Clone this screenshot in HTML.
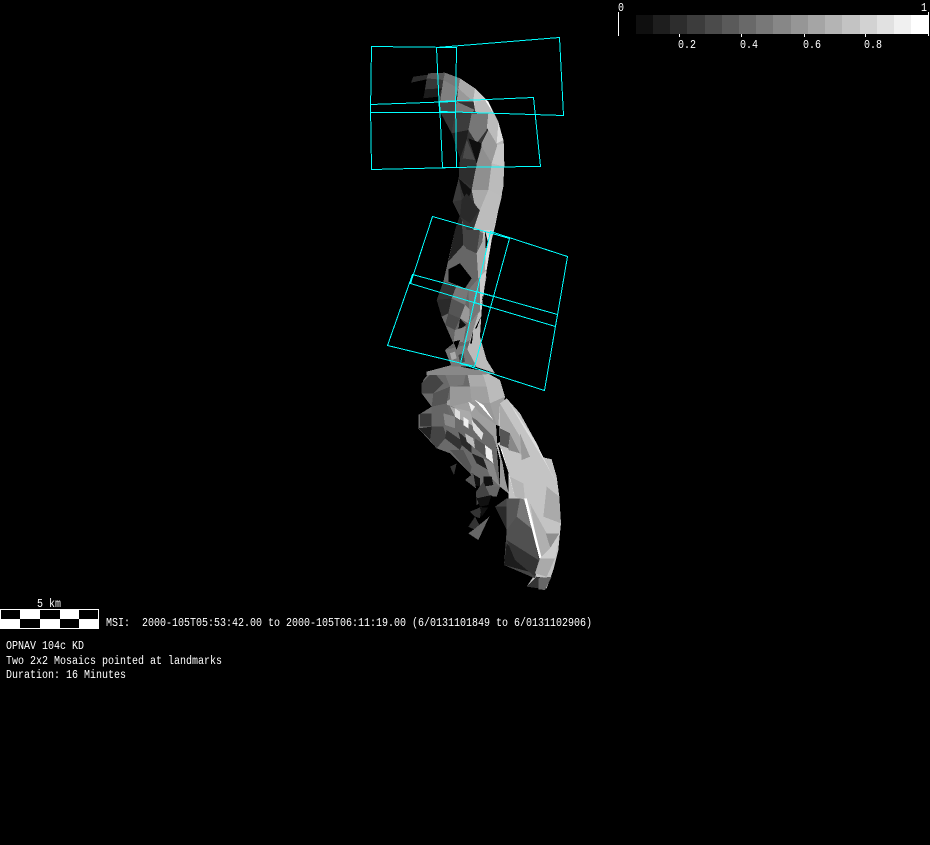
<!DOCTYPE html>
<html><head><meta charset="utf-8"><style>
html,body{margin:0;padding:0;background:#000;width:930px;height:845px;overflow:hidden}
svg{display:block}
text{font-family:"Liberation Mono",monospace;font-size:11.5px;fill:#fff}
.a polygon{shape-rendering:crispEdges}
.c polygon{fill:none;stroke:#0ff;stroke-width:1;shape-rendering:crispEdges}
</style></head><body>
<svg width="930" height="845" viewBox="0 0 930 845" xmlns="http://www.w3.org/2000/svg">
<rect width="930" height="845" fill="#000"/>
<g class="a">
<g transform="translate(400 370) scale(.33333)">
<polygon fill="#6a6a6a" points="55,135 95,110 65,70 70,30 90,5 245,0 300,30 315,80 300,170 290,230 300,350 270,350 240,350 210,310 150,250 110,235 55,175"/>
<polygon fill="#a0a0a0" points="130,100 210,50 245,0 300,30 315,80 300,170 290,230 280,200 230,150 170,115"/>
<polygon fill="#222" points="55,175 95,170 90,210"/>
<polygon fill="#3a3a3a" points="60,130 95,130 95,170 60,170"/>
<polygon fill="#444" points="65,40 100,5 130,40 100,70 65,70"/>
<polygon fill="#555" points="100,70 150,50 140,100 95,110"/>
<polygon fill="#777" points="130,0 200,0 190,45 150,50"/>
<polygon fill="#444" points="95,170 130,170 140,200 110,235 90,210"/>
<polygon fill="#666" points="95,110 140,100 150,140 130,170 95,170"/>
<polygon fill="#999" points="150,50 210,50 215,95 150,110"/>
<polygon fill="#aaa" points="200,0 245,0 260,50 210,50"/>
<polygon fill="#bbb" points="245,0 300,30 315,80 270,100 260,50"/>
<polygon fill="#999" points="210,95 270,100 290,165 240,130"/>
<polygon fill="#eee" points="205,95 225,110 215,125"/>
<polygon fill="#fff" points="225,90 250,105 280,150 265,135"/>
<polygon fill="#aaa" points="150,110 210,125 225,170 165,140"/>
<polygon fill="#ddd" points="165,115 180,125 180,150 165,140"/>
<polygon fill="#eee" points="190,140 205,150 205,175 190,165"/>
<polygon fill="#ddd" points="215,150 250,190 245,210 220,180"/>
<polygon fill="#888" points="130,130 165,140 165,175 135,165"/>
<polygon fill="#333" points="140,180 190,215 180,240 135,205"/>
<polygon fill="#2a2a2a" points="175,185 215,220 215,250 185,225"/>
<polygon fill="#bbb" points="195,190 220,205 225,235 200,215"/>
<polygon fill="#eee" points="255,225 275,240 280,280 258,262"/>
<polygon fill="#555" points="225,205 255,225 258,262 225,235"/>
<polygon fill="#222" points="215,250 250,265 265,300 230,280"/>
<polygon fill="#888" points="250,265 280,280 300,350 270,320"/>
<polygon fill="#555" points="150,240 190,240 215,290 210,310"/>
<polygon fill="#111" points="215,310 240,325 240,350 220,345"/>
<polygon fill="#111" points="250,320 275,320 280,345 250,350"/>
<polygon fill="#333" points="150,290 170,280 162,315"/>
<polygon fill="#555" points="195,330 220,310 228,355"/>
<polygon fill="#666" points="250,350 300,350 290,380 270,378"/>
<polygon fill="#444" points="228,365 250,335 270,378 230,405"/>
<polygon fill="#111" points="230,385 275,375 265,405 240,410"/>
<polygon fill="#333" points="210,425 245,410 240,445 225,440"/>
<polygon fill="#111" points="240,412 265,412 245,440"/>
<polygon fill="#333" points="205,470 225,440 240,468 222,478"/>
<polygon fill="#666" points="222,478 268,440 235,510 205,490"/>
<polygon fill="#c4c4c4" points="300,100 320,85 360,130 410,220 430,262 455,268 470,320 478,380 483,460 475,540 460,600 440,655 380,650 400,620 312,585 320,480 285,410 325,385 325,370 290,230"/>
<polygon fill="#444" points="320,385 375,385 420,565 405,625 312,585 320,480 285,410"/>
<polygon fill="#ddd" points="320,85 410,220 430,262 470,340 440,285 370,170"/>
<polygon fill="#aaa" points="300,100 360,200 375,270 300,170"/>
<polygon fill="#555" points="300,175 330,190 325,235 300,225"/>
<polygon fill="#888" points="330,190 360,250 325,240"/>
<polygon fill="#999" points="360,190 390,260 365,270"/>
<polygon fill="#999" points="300,240 325,310 325,370 300,350"/>
<polygon fill="#fff" points="298,230 306,240 345,380 335,345"/>
<polygon fill="#000" points="288,165 298,168 300,215 292,222"/>
<polygon fill="#000" points="293,222 300,232 326,310 326,370 316,330 308,280"/>
<polygon fill="#b5b5b5" points="330,320 370,340 375,390 345,380"/>
<polygon fill="#aaa" points="440,350 478,380 483,460 430,440"/>
<polygon fill="#555" points="320,385 360,385 350,440 320,480"/>
<polygon fill="#2a2a2a" points="285,410 320,410 320,480"/>
<polygon fill="#777" points="360,385 375,390 400,480 350,440"/>
<polygon fill="#505050" points="350,440 400,480 415,570 320,510 320,480"/>
<polygon fill="#1c1c1c" points="312,585 320,520 405,610"/>
<polygon fill="#333" points="320,510 415,570 405,620 345,570"/>
<polygon fill="#b0b0b0" points="390,400 440,490 470,550 420,565"/>
<polygon fill="#fff" points="372,385 380,385 425,565 418,565"/>
<polygon fill="#8f8f8f" points="437,490 478,490 465,540 450,530"/>
<polygon fill="#ccc" points="478,490 465,565 420,565 450,535"/>
<polygon fill="#aaa" points="420,565 465,565 440,620 405,610"/>
<polygon fill="#333" points="380,650 410,620 440,625 415,655"/>
<polygon fill="#666" points="415,625 455,620 435,660 415,658"/>
</g>
<g transform="translate(380 210) scale(.33333)">
<polygon fill="#888" points="140,485 215,465 345,490 300,495 140,495"/>
<polygon fill="#666" points="245,0 355,0 345,50 335,90 320,180 305,300 300,380 320,450 345,490 285,470 215,470 195,420 220,400 185,320 170,270 190,215 205,150 225,60"/>
<polygon fill="#bbb" points="290,0 355,0 335,90 320,180 305,300 300,380 320,450 345,490 290,470 280,380 295,210 310,70"/>
<polygon fill="#999" points="245,0 290,0 310,70 250,40"/>
<polygon fill="#ccc" points="290,0 355,0 345,50 335,90 310,70"/>
<polygon fill="#444" points="250,30 300,60 290,130 245,110"/>
<polygon fill="#222" points="245,0 250,110 205,155 225,60"/>
<polygon fill="#666" points="205,155 250,105 290,150 290,190 240,170"/>
<polygon fill="#aaa" points="290,130 320,70 320,180 295,210"/>
<polygon fill="#ddd" points="320,70 335,90 320,180 315,180"/>
<polygon fill="#000" points="205,178 240,160 275,205 255,235 205,215"/>
<polygon fill="#333" points="190,215 230,225 215,265 170,270"/>
<polygon fill="#777" points="230,225 265,240 255,285 215,265"/>
<polygon fill="#2a2a2a" points="170,270 215,265 205,310 185,320"/>
<polygon fill="#555" points="215,265 255,285 240,325 205,310"/>
<polygon fill="#999" points="255,285 270,300 265,340 240,325"/>
<polygon fill="#4a4a4a" points="205,310 240,325 225,360 195,345"/>
<polygon fill="#111" points="240,325 258,345 235,360"/>
<polygon fill="#888" points="225,360 258,350 250,395 220,400"/>
<polygon fill="#777" points="265,240 300,200 320,200 300,300 270,340"/>
<polygon fill="#ccc" points="300,200 320,180 305,300 300,300"/>
<polygon fill="#888" points="270,340 300,300 295,380 250,400"/>
<polygon fill="#bbb" points="295,310 305,300 300,380 320,450 345,490 285,470 255,440"/>
<polygon fill="#777" points="195,420 255,405 290,470 215,470"/>
<polygon fill="#aaa" points="210,430 225,425 230,445 215,450"/>
<polygon fill="#444" points="235,435 250,430 255,455 240,460"/>
<polygon fill="#000" points="220,395 240,390 230,420"/>
<polygon fill="#000" points="315,62 325,100 318,130"/>
<polygon fill="#000" points="312,260 305,280 308,258"/>
<polygon fill="#000" points="305,315 285,355 290,355"/>
<polygon fill="#000" points="280,360 270,400 276,400"/>
</g>
<g transform="translate(360 30) scale(.33333)">
<polygon fill="#333" points="190,205 195,178 200,145 205,130 255,128 300,145 345,175 385,215 415,275 430,330 433,400 430,470 415,540 400,600 320,600 300,560 278,515 296,445 300,385 275,310 240,245 235,200"/>
<polygon fill="#bbb" points="345,175 385,215 415,275 430,330 433,400 430,470 415,540 400,600 340,600 360,540 385,480 395,400 385,300 345,240"/>
<polygon fill="#2a2a2a" points="153,158 160,140 203,134 200,148"/>
<polygon fill="#555" points="205,130 255,128 250,150 200,145"/>
<polygon fill="#383838" points="200,145 250,150 245,175 195,178"/>
<polygon fill="#1c1c1c" points="195,178 245,175 235,200 190,205"/>
<polygon fill="#777" points="255,128 300,145 295,175 250,150"/>
<polygon fill="#808080" points="250,150 295,175 285,215 240,215"/>
<polygon fill="#aaa" points="300,145 345,175 340,215 295,175"/>
<polygon fill="#999" points="295,175 340,215 290,215"/>
<polygon fill="#ccc" points="345,175 385,215 345,240 340,210"/>
<polygon fill="#444" points="238,215 290,215 285,245 240,243"/>
<polygon fill="#777" points="290,215 345,240 335,250 285,245"/>
<polygon fill="#bbb" points="345,215 375,210 400,250 345,245"/>
<polygon fill="#fff" points="375,210 385,215 400,250"/>
<polygon fill="#3c3c3c" points="285,250 335,250 325,300 275,310"/>
<polygon fill="#777" points="335,250 385,250 380,300 350,340 325,300"/>
<polygon fill="#bbb" points="385,250 400,250 415,280 410,340 385,300"/>
<polygon fill="#ddd" points="415,280 430,330 410,340"/>
<polygon fill="#1f1f1f" points="275,310 325,300 320,330 300,385"/>
<polygon fill="#4a4a4a" points="320,328 308,385 345,390"/>
<polygon fill="#0f0f0f" points="325,325 365,340 350,400"/>
<polygon fill="#999" points="365,340 385,300 412,345 395,400 365,350"/>
<polygon fill="#8f8f8f" points="350,400 365,350 395,400 385,480 335,480"/>
<polygon fill="#c8c8c8" points="412,345 432,340 433,410 395,400"/>
<polygon fill="#bbb" points="395,400 433,410 425,500 385,480"/>
<polygon fill="#2e2e2e" points="298,410 350,405 335,470 296,445"/>
<polygon fill="#111" points="296,445 335,480 320,520 305,480"/>
<polygon fill="#3a3a3a" points="296,445 305,510 278,515"/>
<polygon fill="#aaa" points="335,480 385,480 360,540 345,530"/>
<polygon fill="#2a2a2a" points="305,510 320,490 358,540 330,580 300,560"/>
<polygon fill="#bcbcbc" points="360,540 385,480 425,500 400,600 340,600"/>
</g>
</g>
<g class="c">
<polygon points="371.5,46.5 456.5,47.5 455.5,112.5 370.5,112.5"/>
<polygon points="436.5,47.5 559.5,37.5 563.5,115.5 439.5,111.5"/>
<polygon points="370.5,104.5 455.5,101.5 456.5,167.5 371.5,169.5"/>
<polygon points="439.5,101.5 533.5,97.5 540.5,166.5 442.5,167.5"/>
<polygon points="432.5,216.5 509.5,238.5 490.5,307.5 410.5,283.5"/>
<polygon points="490.5,231.5 567.5,256.5 555.5,326.5 474.5,302.5"/>
<polygon points="412.5,274.5 493.5,296.5 474.5,366.5 387.5,345.5"/>
<polygon points="476.5,291.5 557.5,314.5 544.5,390.5 460.5,363.5"/>
</g>
<g shape-rendering="crispEdges">
<rect x="636" y="15" width="18" height="19" fill="#0f0f0f"/>
<rect x="653" y="15" width="18" height="19" fill="#1e1e1e"/>
<rect x="670" y="15" width="18" height="19" fill="#2d2d2d"/>
<rect x="687" y="15" width="18" height="19" fill="#3c3c3c"/>
<rect x="705" y="15" width="17" height="19" fill="#4b4b4b"/>
<rect x="722" y="15" width="17" height="19" fill="#5a5a5a"/>
<rect x="739" y="15" width="17" height="19" fill="#696969"/>
<rect x="756" y="15" width="17" height="19" fill="#787878"/>
<rect x="773" y="15" width="18" height="19" fill="#878787"/>
<rect x="791" y="15" width="17" height="19" fill="#969696"/>
<rect x="808" y="15" width="17" height="19" fill="#a5a5a5"/>
<rect x="825" y="15" width="17" height="19" fill="#b4b4b4"/>
<rect x="842" y="15" width="18" height="19" fill="#c3c3c3"/>
<rect x="860" y="15" width="17" height="19" fill="#d2d2d2"/>
<rect x="877" y="15" width="17" height="19" fill="#e1e1e1"/>
<rect x="894" y="15" width="17" height="19" fill="#f0f0f0"/>
<rect x="911" y="15" width="18" height="19" fill="#fff"/>
<rect x="618" y="12" width="1" height="24" fill="#fff"/>
<rect x="928" y="12" width="1" height="24" fill="#fff"/>
<rect x="679" y="34" width="1" height="3" fill="#fff"/>
<rect x="741" y="34" width="1" height="3" fill="#fff"/>
<rect x="804" y="34" width="1" height="3" fill="#fff"/>
<rect x="865" y="34" width="1" height="3" fill="#fff"/>
<rect x="0" y="609" width="99" height="20" fill="#fff"/>
<rect x="1" y="610" width="19" height="9" fill="#000"/>
<rect x="40" y="610" width="20" height="9" fill="#000"/>
<rect x="79" y="610" width="19" height="9" fill="#000"/>
<rect x="20" y="619" width="20" height="9" fill="#000"/>
<rect x="60" y="619" width="19" height="9" fill="#000"/>
</g>
<text x="618" y="11" textLength="6" lengthAdjust="spacingAndGlyphs">0</text>
<text x="921" y="11" textLength="6" lengthAdjust="spacingAndGlyphs">1</text>
<text x="678" y="48" textLength="18" lengthAdjust="spacingAndGlyphs">0.2</text>
<text x="740" y="48" textLength="18" lengthAdjust="spacingAndGlyphs">0.4</text>
<text x="803" y="48" textLength="18" lengthAdjust="spacingAndGlyphs">0.6</text>
<text x="864" y="48" textLength="18" lengthAdjust="spacingAndGlyphs">0.8</text>
<text x="37" y="607" textLength="24" lengthAdjust="spacingAndGlyphs">5 km</text>
<text x="106" y="626" textLength="486" lengthAdjust="spacingAndGlyphs" xml:space="preserve">MSI:  2000-105T05:53:42.00 to 2000-105T06:11:19.00 (6/0131101849 to 6/0131102906)</text>
<text x="6" y="649" textLength="78" lengthAdjust="spacingAndGlyphs">OPNAV 104c KD</text>
<text x="6" y="664" textLength="216" lengthAdjust="spacingAndGlyphs">Two 2x2 Mosaics pointed at landmarks</text>
<text x="6" y="678" textLength="120" lengthAdjust="spacingAndGlyphs">Duration: 16 Minutes</text>
</svg>
</body></html>
